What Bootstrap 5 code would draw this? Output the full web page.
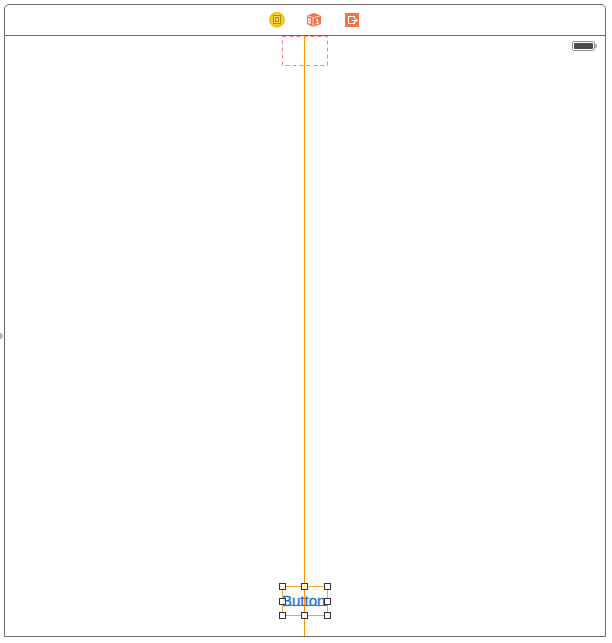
<!DOCTYPE html>
<html lang="en">
<head>
<meta charset="utf-8">
<meta name="viewport" content="width=device-width, initial-scale=1">
<title>View controller scene</title>
<link href="https://cdn.jsdelivr.net/npm/bootstrap@5.3.0/dist/css/bootstrap.min.css" rel="stylesheet">
<style>
body { font-family: "Liberation Sans", Arial, sans-serif; background: #fff; }
.stage { padding: 4px 6px 6px 4px; }
.scene { border: 1px solid #6b6b6b; border-radius: 5px 5px 0 0; background: #fff; }
.dock { height: 31px; gap: 22px; padding-left: 20px; border-bottom: 1px solid #6b6b6b; }
.dock button { line-height: 0; }
.status-bar { padding: 4px 7px; line-height: 0; }
.entry { left: -5px; top: 50%; transform: translateY(-50%); line-height: 0; }
.ghost, .selection { width: 46px; height: 30px; left: 50%; margin-left: -23px; }
.ghost { top: 0; }
.guide { width: 1px; left: 50%; margin-left: -1px; background: #ff9500; }
.selection { bottom: 20px; }
.selection button { font-size: 15px; line-height: 30px; color: #1a73e0; width: 46px; -webkit-text-stroke: .3px #1a73e0; }
.overlay-lines { left: -3px; top: -3px; }
</style>
</head>
<body>
<main class="stage vh-100 d-flex">
  <section class="scene flex-grow-1 d-flex flex-column" aria-label="View controller">
    <header class="dock d-flex align-items-center justify-content-center">
      <button type="button" class="border-0 bg-transparent p-0" aria-label="View controller">
        <svg width="16" height="16" viewBox="0 0 16 16"><circle cx="8" cy="7.8" r="7.8" fill="#f8cb1c"/><circle cx="8" cy="7.8" r="7.2" fill="none" stroke="#edb91f"/><rect x="4.5" y="3.5" width="7" height="8" fill="#ffdc43" stroke="#a88a1c"/><rect x="6.5" y="5.5" width="3" height="4" fill="#ffe66b" stroke="#a98616"/></svg>
      </button>
      <button type="button" class="border-0 bg-transparent p-0" aria-label="First responder">
        <svg width="16" height="16" viewBox="0 0 16 16"><path d="M0 3.5 7 1l7 2.5V12l-8 3-6-3z" fill="#f47245"/><path d="M.2 3.7 6 5.7 14 3.6M6 5.7V15" fill="none" stroke="#fff" stroke-width=".7"/><path d="M1.5 6.8v3.8l1.7.7V7.4zM9 8.1l1.5-.6v4M8.5 12.1l3.5-1.2" fill="none" stroke="#fff" stroke-width="1.1"/></svg>
      </button>
      <button type="button" class="border-0 bg-transparent p-0" aria-label="Exit">
        <svg width="16" height="16" viewBox="0 0 16 16"><path d="M0 1h14v14H0z" fill="#f47245"/><path d="M9.5 6.5v-2h-6v7h6v-2M7 8.5h5" fill="none" stroke="#fff" stroke-width="1.1"/><path d="M10.5 6.3 13 8.5l-2.5 2.2z" fill="#fff"/></svg>
      </button>
    </header>
    <div class="flex-grow-1 position-relative">
      <span class="entry position-absolute" aria-hidden="true"><svg width="4" height="6"><path d="M0 0h1l2 2v2l-2 2H0z" fill="#b5b5b5"/></svg></span>
      <div class="status-bar d-flex justify-content-end">
        <svg width="26" height="12" viewBox="0 0 26 12" role="img" aria-label="Battery full"><rect x=".5" y="1.5" width="22" height="9" rx="1.8" fill="#fff" stroke="#888"/><rect x="2" y="3" width="19" height="6" rx=".7" fill="#4b4d4b"/><path d="M24 4v4" stroke="#666"/></svg>
      </div>
      <svg class="ghost position-absolute" viewBox="0 0 46 30" aria-hidden="true"><rect x=".5" y=".5" width="45" height="29" fill="none" stroke="#fb7f82" stroke-dasharray="4 3"/></svg>
      <div class="selection position-absolute">
        <button type="button" class="border-0 bg-transparent p-0 d-block text-start">Button</button>
      </div>
      <div class="guide position-absolute top-0 bottom-0"></div>
      <div class="selection position-absolute pe-none" aria-hidden="true">
        <svg class="overlay-lines position-absolute" width="52" height="36" viewBox="0 0 52 36">
          <rect x="3.5" y="3.5" width="45" height="29" fill="none" stroke="#ffa22b"/>
          <path d="M4 22.5h44" stroke="#e03a4e"/>
          <g fill="#fff" fill-opacity=".85" stroke="#333" stroke-width="1">
            <rect x=".5" y=".5" width="6" height="6"/><rect x="22.5" y=".5" width="6" height="6"/><rect x="45.5" y=".5" width="6" height="6"/>
            <rect x=".5" y="15.5" width="6" height="6"/><rect x="45.5" y="15.5" width="6" height="6"/>
            <rect x=".5" y="29.5" width="6" height="6"/><rect x="22.5" y="29.5" width="6" height="6"/><rect x="45.5" y="29.5" width="6" height="6"/>
          </g>
        </svg>
      </div>
    </div>
  </section>
</main>
<script src="https://cdn.jsdelivr.net/npm/bootstrap@5.3.0/dist/js/bootstrap.bundle.min.js"></script>
</body>
</html>
